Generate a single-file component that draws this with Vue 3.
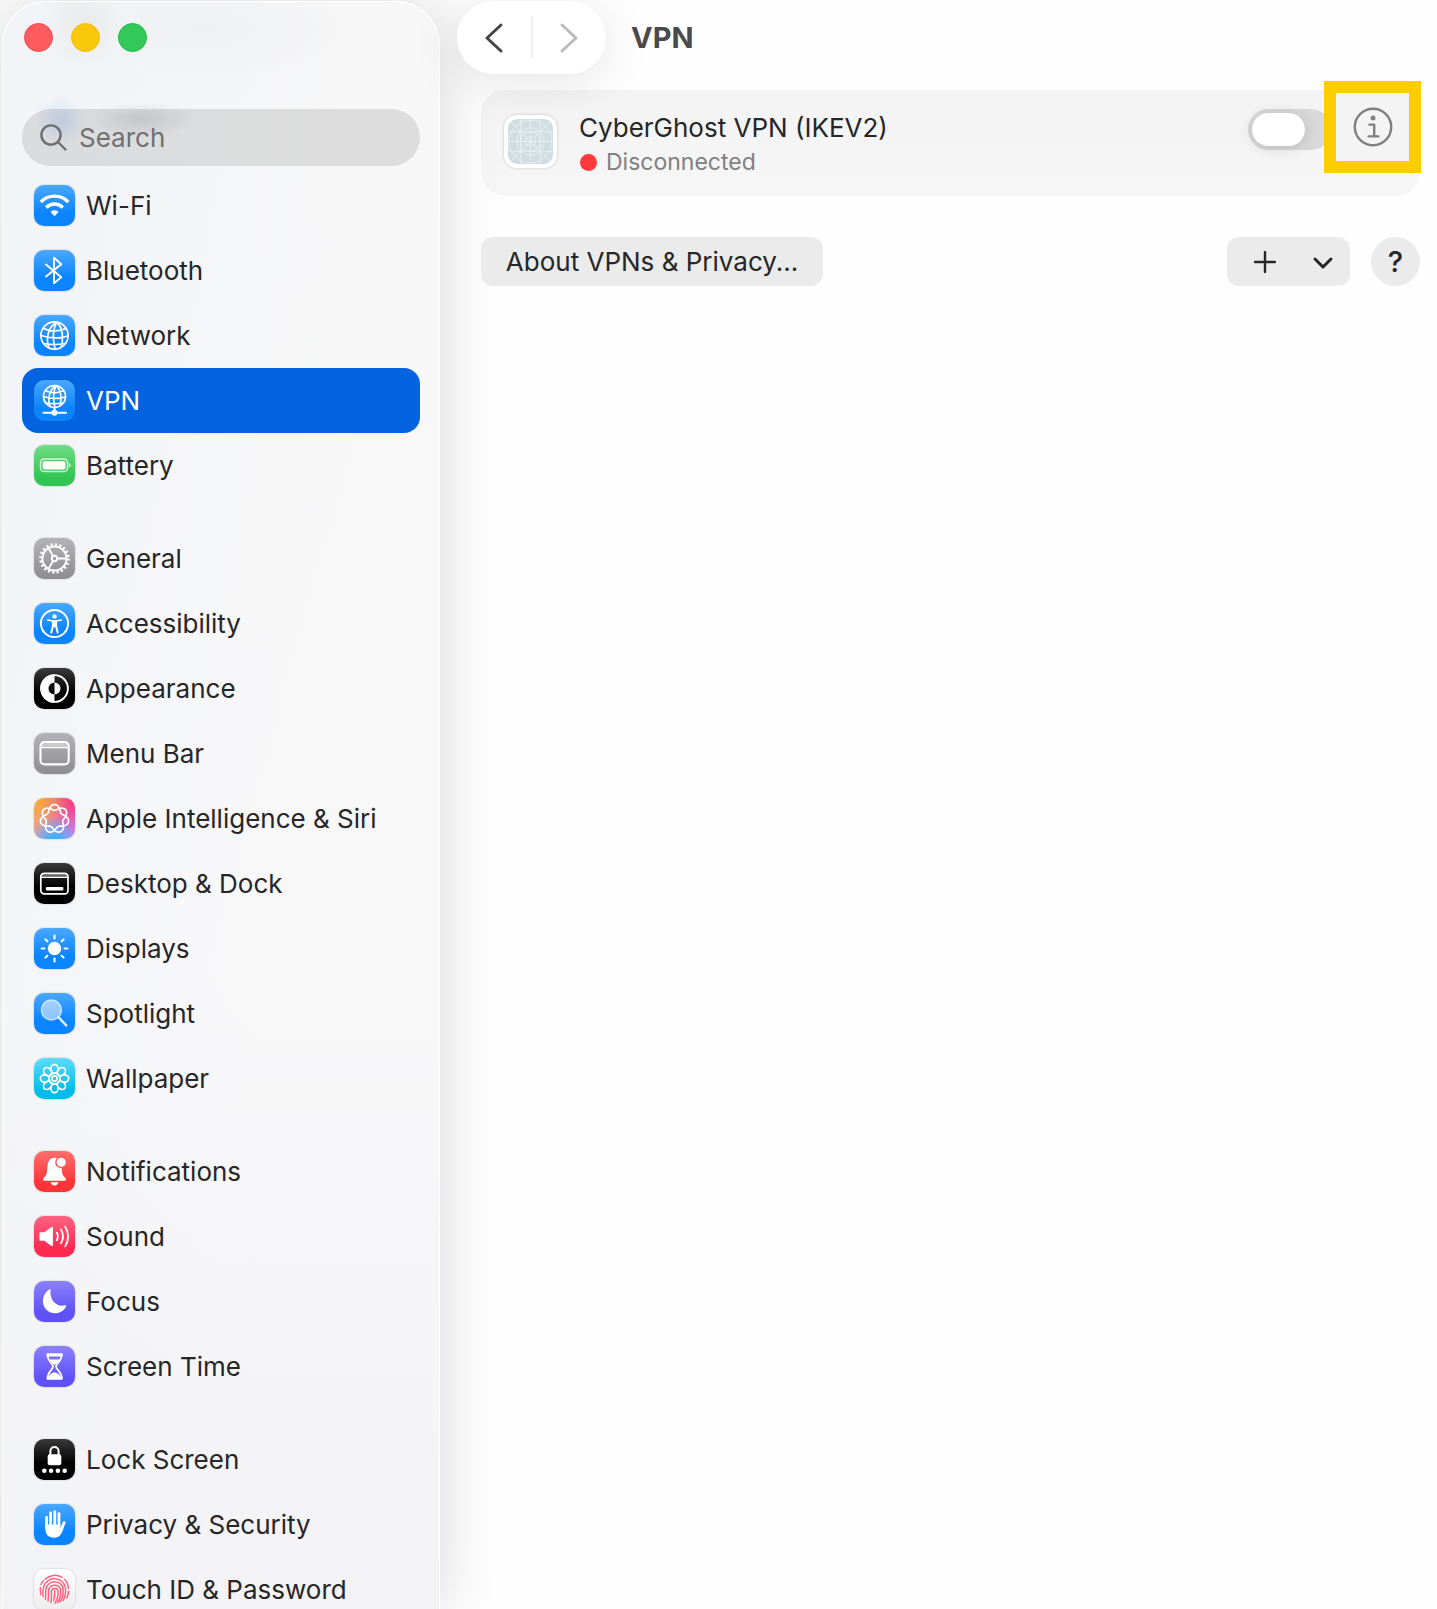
<template>
  <div class="window">
    <aside class="sidebar">
      <div class="lights">
        <button class="light red" aria-label="Close"></button>
        <button class="light yellow" aria-label="Minimize"></button>
        <button class="light green" aria-label="Zoom"></button>
      </div>

      <label class="search">
        <svg class="search-icon" viewBox="0 0 28 28">
          <circle cx="11" cy="11" r="9.6" />
          <path d="M18 18 L25.5 25.5" />
        </svg>
        <input v-model="query" type="search" placeholder="Search" aria-label="Search" />
      </label>

      <nav class="nav">
        <ul v-for="(group, i) in groups" :key="i" class="group">
          <li v-for="item in group" :key="item.name">
            <a
              href="#"
              class="row"
              :class="{ selected: item.name === current }"
              @click.prevent="current = item.name"
            >
              <svg class="tile" :class="item.tile" viewBox="0 0 41 41" v-html="item.icon"></svg>
              <span>{{ item.name }}</span>
            </a>
          </li>
        </ul>
      </nav>
    </aside>

    <main class="main">
      <header class="toolbar">
        <div class="pager">
          <button aria-label="Back">
            <svg viewBox="0 0 20 32"><path d="M17 3 L3 16 L17 29" /></svg>
          </button>
          <span class="divider"></span>
          <button aria-label="Forward" class="off">
            <svg viewBox="0 0 20 32"><path d="M3 3 L17 16 L3 29" /></svg>
          </button>
        </div>
        <h1>VPN</h1>
      </header>

      <section class="card">
        <svg class="app-icon" viewBox="0 0 46 46">
          <rect width="46" height="46" rx="8" fill="#cfdde3" />
          <g fill="none" stroke="#e6eef0" stroke-width="1">
            <path d="M13 0V46M23 0V46M33 0V46M0 13H46M0 23H46M0 33H46M0 0L46 46M46 0L0 46" />
            <circle cx="23" cy="23" r="22" />
            <circle cx="23" cy="23" r="14" />
            <circle cx="23" cy="23" r="10" />
            <circle cx="23" cy="23" r="5" />
          </g>
        </svg>
        <div class="info">
          <label for="vpn-switch" class="name">CyberGhost VPN (IKEV2)</label>
          <div class="status"><span class="dot"></span>Disconnected</div>
        </div>
        <input id="vpn-switch" v-model="connected" class="switch" type="checkbox" role="switch" />
        <button class="details" aria-label="VPN details">
          <svg viewBox="0 0 40 40">
            <circle cx="20" cy="20" r="18.2" />
            <path d="M16.4 17.6 H21.2 V29.2 M15.6 29.4 H25.4" />
            <circle class="fill" cx="20" cy="11" r="2.5" />
          </svg>
        </button>
      </section>

      <div class="actions">
        <button class="about">About VPNs &amp; Privacy...</button>
        <button class="add" aria-label="Add VPN configuration">
          <svg viewBox="0 0 22 22"><path d="M11 1 V21 M1 11 H21" /></svg>
          <svg viewBox="0 0 22 22"><path class="bold" d="M3 8 L11 16 L19 8" /></svg>
        </button>
        <button class="help" aria-label="Help">?</button>
      </div>
    </main>
  </div>
</template>

<script setup>
import { ref } from 'vue';

const query = ref('');
const current = ref('VPN');
const connected = ref(false);

// closed curve that goes round twice and crosses itself between seven lobes
const knot = () => {
  const pts = [];
  for (let i = 0; i <= 280; i++) {
    const t = (i / 280) * Math.PI * 4;
    const r = 11.4 + 2.9 * Math.cos(3.5 * t);
    const x = 20.5 + r * Math.sin(t);
    const y = 20.8 - r * Math.cos(t);
    pts.push(`${x.toFixed(2)} ${y.toFixed(2)}`);
  }
  return `M${pts.join('L')}Z`;
};

const spin = (n, shape) =>
  Array.from({ length: n }, (_, i) => `<g transform="rotate(${(360 / n) * i} 20.5 20.5)">${shape}</g>`).join('');

const line = (w, body) =>
  `<g fill="none" stroke="#fff" stroke-width="${w}" stroke-linecap="round" stroke-linejoin="round">${body}</g>`;

const globe = '<circle cx="20.5" cy="20.5" r="13.6"/><path d="M22.5 7C14 12 11.5 24 15 33M22.5 7C18.5 15 19 26 21 34M22.5 7C29.5 13 29.5 25 27 32M9.5 13.5Q20 18.5 32 13.5M7 20.5Q20 25 34 21M9.5 28.5Q20 30.5 31.5 28.5"/>';

const icons = {
  wifi: line(3.4, '<path d="M6.8 17A19 19 0 0 1 34.2 17M12.2 22.4A12 12 0 0 1 28.8 22.4" stroke-linecap="butt"/>')
    + '<path fill="#fff" d="M20.5 31.2L16.4 26.8A6 6 0 0 1 24.6 26.8Z"/>',
  bluetooth: line(1.9, '<path d="M12 14.5L27.3 27.2L20 33.2V7.6L27.3 14.2L12 26.5"/>'),
  network: line(1.7, globe),
  vpn: line(2, `<g transform="translate(3.9 -.1) scale(.81)">${globe}</g><path d="M20.5 27.5V31M9.5 32.8H32"/>`)
    + '<circle cx="20.5" cy="32.8" r="3" fill="#fff"/>',
  battery: line(1.5, '<rect x="6.5" y="14" width="27" height="12.6" rx="3.6" stroke-opacity=".75"/>')
    + '<rect x="8.6" y="16.2" width="22.8" height="8.2" rx="1.6" fill="#fff"/><path fill="#fff" fill-opacity=".8" d="M34.8 18V22.6Q36.6 22 36.6 20.3T34.8 18Z"/>',
  gear: line(1.9, '<circle cx="20.5" cy="20.5" r="12"/><circle cx="20.5" cy="20.5" r="2.7"/><path d="M23.2 20.5H32.5M19 18L14.4 10M19 23L14.4 31"/>')
    + '<circle cx="20.5" cy="20.5" r="14" fill="none" stroke="#fff" stroke-width="2.6" stroke-dasharray="2.1 2.3"/>',
  accessibility: line(2, '<circle cx="20.5" cy="20.5" r="13.6"/><path d="M13.8 17L19 18H22L27.2 17" stroke-width="1.7"/><path d="M19 18.5L18.8 23.5L17.3 29.5M22 18.5L22.2 23.5L23.7 29.5"/>')
    + '<circle cx="20.5" cy="13.4" r="2.2" fill="#fff"/><path fill="#fff" d="M18.2 17.5H22.8V23.5L20.5 24.5L18.2 23.5Z"/>',
  appearance: line(1.9, '<circle cx="20.5" cy="20.5" r="13.4"/>')
    + '<path fill="#fff" d="M20.5 6.5A14 14 0 0 0 20.5 34.5V26.5A6 6 0 0 1 20.5 14.5ZM20.5 14.5A6 6 0 0 1 20.5 26.5Z"/>',
  menubar: '<path fill="#fff" fill-opacity=".4" d="M7 9H34V14H7Z"/>'
    + line(2.1, '<rect x="6.5" y="9" width="28.2" height="22.4" rx="4"/><path d="M7 14.6H34" stroke-width="1.2"/>'),
  siri: line(1.7, `<path d="${knot()}"/>`),
  dock: '<path fill="#fff" fill-opacity=".3" d="M7 11H34V14H7Z"/>'
    + line(1.7, '<rect x="6.8" y="10.4" width="27.2" height="20.4" rx="3.4"/><path d="M7 14.4H34" stroke-width="1.1"/>')
    + '<rect x="11.8" y="24" width="17.6" height="3.4" rx="1" fill="#fff"/>',
  sun: '<circle cx="20.5" cy="20.5" r="6.7" fill="#fff"/>' + line(2.1, spin(8, '<path d="M20.5 7.6V10.4"/>')),
  spotlight: '<circle cx="17.4" cy="17" r="10" fill="#fff" fill-opacity=".52"/>'
    + line(1.4, '<circle cx="17.4" cy="17" r="10" stroke-opacity=".65"/><path d="M24.8 24.6L32.2 32.4" stroke-width="2.4" stroke-opacity=".85"/>'),
  flower: line(1.7, spin(8, '<ellipse cx="20.5" cy="10.7" rx="3.6" ry="4.4"/>') + '<circle cx="20.5" cy="20.5" r="2.6"/><circle cx="20.5" cy="20.5" r="5.2" stroke-width="1.3"/>'),
  bell: '<path fill="#fff" d="M20.5 6.8C14.6 7.2 13.6 12 13.3 17C13.1 22 12.6 24 10 26.6C8.4 28.4 8.6 29.8 10.4 29.8H30.6C32.4 29.8 32.6 28.4 31 26.6C28.4 24 27.9 22 27.7 17C27.4 12 26.4 7.2 20.5 6.8ZM16.6 31.2H24.4Q23.4 34.4 20.5 34.4T16.6 31.2Z"/>'
    + '<circle cx="27.2" cy="11.3" r="5.3" fill="#fff" stroke="#ff5c5c" stroke-width="1.5"/>',
  sound: '<path fill="#fff" d="M6.6 16.2H10.4L17 11.2Q18.9 10.2 18.9 12.2V28.8Q18.9 30.8 17 29.8L10.4 24.8H6.6Q5.4 24.8 5.4 23.6V17.4Q5.4 16.2 6.6 16.2Z"/>'
    + line(1.8, '<path d="M22.8 16.8Q25 20.5 22.8 24.2M27 13.6Q31 20.5 27 27.4M31.2 10.6Q37 20.5 31.2 30.4"/>'),
  moon: '<path fill="#fff" d="M16.6 8.4C15.2 17.6 21.4 26.8 31.6 24.2Q32.8 24 32.2 25.2C27.4 35.4 12.4 34.4 9.4 23.6C7.8 17.4 10.6 11.2 15.6 8.2Q16.7 7.6 16.6 8.4Z"/>',
  hourglass: line(1.7, '<path d="M13.6 8.4H27.6C27.8 16 22 17 22 20.5C22 24 27.8 25 27.6 32.6H13.6C13.4 25 19 24 19 20.5C19 17 13.4 16 13.6 8.4Z"/>')
    + '<path fill="#fff" d="M12.6 7.4H28.6V10.6H12.6ZM12.6 30.4H28.6V33.4H12.6ZM14.6 13.4H26.6L20.5 19ZM14.6 31.6Q15.4 27 20.5 26.2Q25.6 27 26.6 31.6Z"/>',
  lock: '<rect x="13.7" y="15.2" width="13.6" height="11" rx="2" fill="#fff"/>'
    + line(2, '<path d="M16.4 16V12A4.1 4.1 0 0 1 24.6 12V16"/>')
    + '<g fill="#fff"><circle cx="10.3" cy="31.8" r="2.3"/><circle cx="17.1" cy="31.8" r="2.3"/><circle cx="23.9" cy="31.8" r="2.3"/><circle cx="30.7" cy="31.8" r="2.3"/></g>',
  hand: line(2.8, '<path d="M12.6 13.4V24M16.6 9V22M20.8 7.6V22M25 9.6V22M30.2 18.6L26.6 27"/>')
    + '<path fill="#fff" d="M11.3 20.5H26.4V24L29.8 23C28 30 25.6 33.8 20.2 33.8C14 33.8 11.3 30 11.3 24Z"/>',
  touch: '<g fill="none" stroke="#ff6482" stroke-width="1.5" stroke-linecap="round">'
    + '<path d="M11 10.2A14 14 0 0 1 28 8.4M30.4 10.2A14 14 0 0 1 34.4 19.6M34.6 22.4Q34.4 26 32.8 28.8M7 15.6Q8 13 9.4 11.8M6.4 18.6Q6 22 7 25.6"/>'
    + '<path d="M9 27.4Q8.6 21.4 9.8 17.4A11.2 11.2 0 0 1 31.4 18.4Q32.4 26 29 31.6M11.4 30.2Q11.8 26 11.8 21A8.8 8.8 0 0 1 29 19Q30 27.4 25.8 33M14 32.2Q14.8 27 14.6 21.4A6.2 6.2 0 0 1 26.6 20.4Q27.4 28 23.4 33.8M17 33.6Q17.8 28 17.4 22.2A3.5 3.5 0 0 1 24 21.4Q24.6 28.4 21 34.2M20.6 21.8Q21.2 27 19.6 31.6"/>'
    + '</g>',
};

const item = (name, tile, icon) => ({ name, tile, icon: icons[icon] });

const groups = [
  [
    item('Wi-Fi', 'blue', 'wifi'),
    item('Bluetooth', 'blue', 'bluetooth'),
    item('Network', 'blue', 'network'),
    item('VPN', 'blue', 'vpn'),
    item('Battery', 'green', 'battery'),
  ],
  [
    item('General', 'gray', 'gear'),
    item('Accessibility', 'blue', 'accessibility'),
    item('Appearance', 'black', 'appearance'),
    item('Menu Bar', 'gray', 'menubar'),
    item('Apple Intelligence & Siri', 'rainbow', 'siri'),
    item('Desktop & Dock', 'black', 'dock'),
    item('Displays', 'blue', 'sun'),
    item('Spotlight', 'blue', 'spotlight'),
    item('Wallpaper', 'cyan', 'flower'),
  ],
  [
    item('Notifications', 'red', 'bell'),
    item('Sound', 'pink', 'sound'),
    item('Focus', 'indigo', 'moon'),
    item('Screen Time', 'indigo', 'hourglass'),
  ],
  [
    item('Lock Screen', 'black', 'lock'),
    item('Privacy & Security', 'blue', 'hand'),
    item('Touch ID & Password', 'white', 'touch'),
  ],
];
</script>

<style>
body {
  background: #fefefe;
}
</style>

<style scoped>
.window {
  display: flex;
  height: 100vh;
  overflow: hidden;
  box-sizing: border-box;
  padding: 1px 0 0 2px;
  font-family: Inter, "Liberation Sans", sans-serif;
  font-size: 26px;
  color: #262628;
}

button {
  border: none;
  padding: 0;
  font: inherit;
  color: inherit;
  cursor: pointer;
}

.sidebar {
  flex: none;
  width: 438px;
  box-sizing: border-box;
  padding: 21px 20px 0;
  border: 1px solid #fff;
  border-bottom: none;
  border-radius: 44px 44px 0 0;
  background:
    radial-gradient(ellipse 44px 60px at 78px 20px, rgba(120, 120, 80, 0.07), transparent),
    radial-gradient(ellipse 150px 50px at 200px 26px, rgba(80, 80, 90, 0.03), transparent),
    radial-gradient(circle 24px at 58px 118px, rgba(90, 150, 240, 0.2), transparent),
    radial-gradient(ellipse 54px 18px at 138px 117px, rgba(60, 60, 60, 0.13), transparent),
    linear-gradient(100deg, rgba(240, 242, 247, 0.7), transparent 60%),
    linear-gradient(#f7f7f7, #f8f8f9 60%, #f3f3f6);
  box-shadow: 0 0 60px rgba(0, 0, 0, 0.16);
  overflow-y: auto;
  scrollbar-width: none;
}

.lights {
  display: flex;
  gap: 18px;
  padding-left: 1px;
}

.light {
  width: 29px;
  height: 29px;
  border-radius: 50%;
}

.red.light {
  background: #ff5c60;
  border: 1px solid #f5464d;
}

.yellow.light {
  background: #fac80a;
  border: 1px solid #f2bd0c;
}

.green.light {
  background: #34c85a;
  border: 1px solid #1bbd41;
}

.search {
  display: flex;
  align-items: center;
  gap: 11px;
  height: 57px;
  margin: 57px -1px 0;
  padding: 0 18px;
  border-radius: 29px;
  background: rgba(0, 0, 0, 0.1);
}

.search-icon {
  width: 28px;
  height: 28px;
  fill: none;
  stroke: #6e6e70;
  stroke-width: 2.4;
  stroke-linecap: round;
}

.search input {
  flex: 1;
  min-width: 0;
  border: none;
  padding: 0;
  outline: none;
  background: none;
  font: inherit;
  color: #262628;
}

.search input::placeholder {
  color: #707072;
  opacity: 1;
}

.nav {
  display: flex;
  flex-direction: column;
  gap: 28px;
  margin: 7px -1px 0;
}

.group {
  list-style: none;
  margin: 0;
  padding: 0;
}

.row {
  display: flex;
  align-items: center;
  gap: 11px;
  height: 65px;
  padding-left: 12px;
  border-radius: 16px;
  color: inherit;
  text-decoration: none;
  white-space: nowrap;
}

.row.selected {
  background: #0464e0;
  color: #fff;
}

.tile {
  flex: none;
  width: 41px;
  height: 41px;
  border-radius: 10px;
  box-shadow: 0 0 2px rgba(0, 0, 0, 0.25);
}

.tile.blue {
  background: linear-gradient(#4aa8ff, #0a84ff 70%);
}

.tile.green {
  background: linear-gradient(#72dc86, #30c552 80%);
}

.tile.gray {
  background: linear-gradient(#b2b2b7, #8c8c91);
}

.tile.black {
  background: linear-gradient(#3a3a3a, #000 60%);
}

.tile.cyan {
  background: linear-gradient(#5cdcfa, #00bde8 80%);
}

.tile.red {
  background: linear-gradient(#ff6f6c, #ff3338 80%);
}

.tile.pink {
  background: linear-gradient(#ff6482, #ff2850 80%);
}

.tile.indigo {
  background: linear-gradient(#8c80ff, #5f50f8 80%);
}

.tile.white {
  background: linear-gradient(#fff, #ededed);
}

.tile.rainbow {
  background:
    radial-gradient(circle at 50% 105%, #22b8ff, transparent 50%),
    radial-gradient(circle at 0 0, #ffab20, transparent 65%),
    radial-gradient(circle at 100% 0, #ff2e6c, transparent 70%),
    linear-gradient(90deg, #e0a0b0, #c48cff);
}

.main {
  flex: 1;
  min-width: 0;
  padding: 0 17px 0 41px;
}

.toolbar {
  display: flex;
  align-items: center;
  gap: 25px;
  margin-left: -24px;
}

.pager {
  display: flex;
  align-items: center;
  height: 73px;
  width: 149px;
  border-radius: 37px;
  background: #fff;
  box-shadow: 0 8px 50px rgba(0, 0, 0, 0.1);
}

.pager button {
  flex: 1;
  display: flex;
  justify-content: center;
  background: none;
}

.pager svg {
  width: 20px;
  height: 32px;
  fill: none;
  stroke: #454547;
  stroke-width: 3;
  stroke-linecap: round;
  stroke-linejoin: round;
}

.pager .off svg {
  stroke: #bbb;
}

.divider {
  width: 2px;
  height: 41px;
  background: #f0f0f0;
}

h1 {
  margin: 0;
  font-size: 29px;
  font-weight: 700;
  color: #4a4a4c;
}

.card {
  position: relative;
  display: flex;
  height: 106px;
  box-sizing: border-box;
  margin-top: 16px;
  padding: 19px 89px 0 23px;
  border-radius: 24px;
  background: linear-gradient(rgba(0, 0, 0, 0.045), rgba(0, 0, 0, 0.032));
}

.app-icon {
  flex: none;
  width: 45px;
  height: 45px;
  margin-top: 6px;
  border: 4px solid #fff;
  border-radius: 13px;
  background: #fff;
  box-shadow: 0 0 3px rgba(0, 0, 0, 0.22);
}

.info {
  flex: 1;
  margin-left: 22px;
}

.name {
  display: block;
  line-height: 38px;
}

.status {
  display: flex;
  align-items: center;
  gap: 9px;
  font-size: 23px;
  line-height: 30px;
  color: #808082;
}

.dot {
  width: 17px;
  height: 17px;
  margin-left: 1px;
  border-radius: 50%;
  background: #ff383c;
}

.switch {
  appearance: none;
  width: 83px;
  height: 41px;
  margin: 0;
  padding: 4px;
  border-radius: 21px;
  background: #d9d9d9;
}

.switch::before {
  content: "";
  display: block;
  width: 53px;
  height: 33px;
  border-radius: 17px;
  background: #fff;
  box-shadow: 0 2px 16px rgba(0, 0, 0, 0.14);
}

.switch:checked {
  background: #0a84ff;
}

.switch:checked::before {
  margin-left: 22px;
}

/* marker frame that sits over the card's corner */
.details {
  position: absolute;
  top: -9px;
  right: -1px;
  display: flex;
  align-items: center;
  justify-content: center;
  width: 97px;
  height: 92px;
  border: 12px solid #ffcc00;
  background: #f4f4f4;
}

.details svg {
  width: 40px;
  height: 40px;
  fill: none;
  stroke: #808080;
  stroke-width: 2.4;
  stroke-linecap: round;
  stroke-linejoin: round;
}

.details .fill {
  fill: #808080;
  stroke: none;
}

.actions {
  display: flex;
  gap: 21px;
  margin-top: 41px;
}

.actions button {
  height: 49px;
  background: #ebebeb;
}

.actions .about {
  width: 342px;
  margin-right: auto;
  border-radius: 12px;
  white-space: nowrap;
}

.actions .add {
  display: flex;
  align-items: center;
  justify-content: space-between;
  width: 123px;
  padding: 0 16px 0 27px;
  border-radius: 12px;
}

.add svg {
  width: 22px;
  height: 22px;
  fill: none;
  stroke: #262628;
  stroke-width: 2.4;
  stroke-linecap: round;
  stroke-linejoin: round;
}

.add .bold {
  stroke-width: 3;
}

.actions .help {
  width: 49px;
  border-radius: 50%;
  font-size: 29px;
  font-weight: 500;
}
</style>
